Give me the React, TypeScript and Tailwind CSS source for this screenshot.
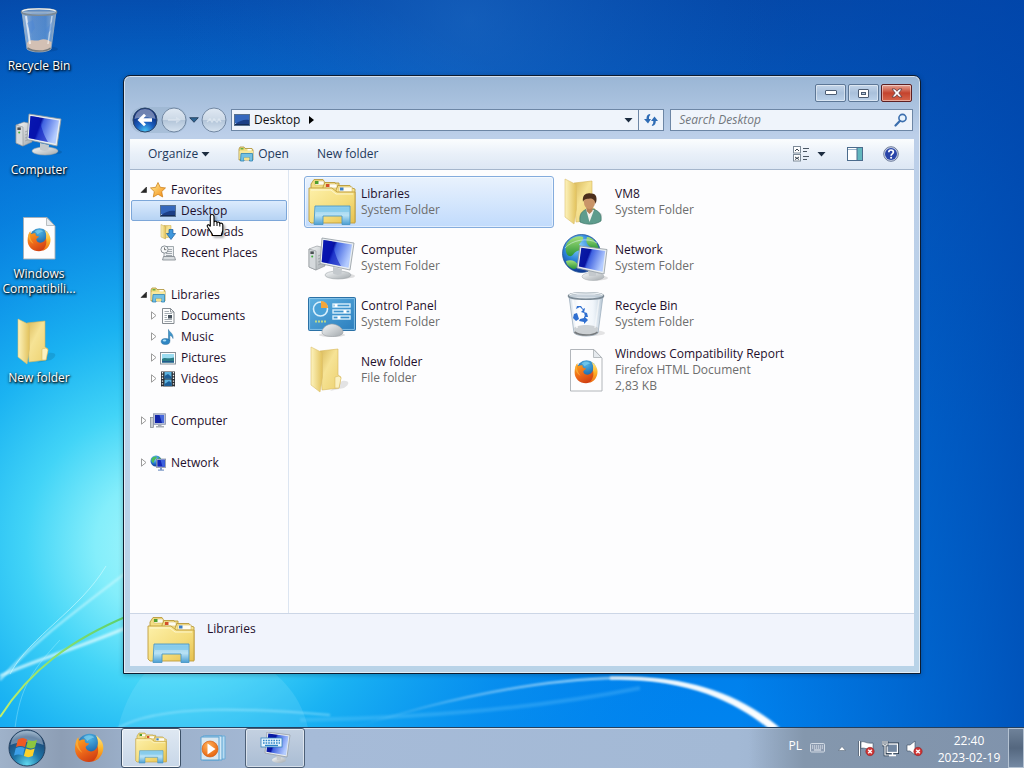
import React from "react";

type IconProps = { className?: string };

function SharedDefs() {
  return (
    <svg width="0" height="0" className="absolute" aria-hidden="true">
      <defs>
        <linearGradient id="screen" x1="0" y1="0" x2="1" y2="0.35">
          <stop offset="0" stopColor="#0a1fa8" />
          <stop offset="0.42" stopColor="#0713a0" />
          <stop offset="0.5" stopColor="#3f62e0" />
          <stop offset="1" stopColor="#b4ccff" />
        </linearGradient>
        <linearGradient id="metal" x1="0" y1="0" x2="1" y2="1">
          <stop offset="0" stopColor="#f7f9fa" />
          <stop offset="1" stopColor="#a3a9ad" />
        </linearGradient>
        <linearGradient id="folder" x1="0" y1="0" x2="1" y2="0">
          <stop offset="0" stopColor="#fdf3bd" />
          <stop offset="1" stopColor="#e2c25c" />
        </linearGradient>
        <linearGradient id="folderBack" x1="0" y1="0" x2="1" y2="1">
          <stop offset="0" stopColor="#d9b95a" />
          <stop offset="0.4" stopColor="#f6e395" />
          <stop offset="1" stopColor="#ecd06e" />
        </linearGradient>
        <linearGradient id="libBody" x1="0" y1="0" x2="1" y2="1">
          <stop offset="0" stopColor="#fdf0a9" />
          <stop offset="0.6" stopColor="#f4dc7a" />
          <stop offset="1" stopColor="#e6c04f" />
        </linearGradient>
        <linearGradient id="libStand" x1="0" y1="0" x2="0" y2="1">
          <stop offset="0" stopColor="#8fcdec" />
          <stop offset="0.5" stopColor="#b9e2f5" />
          <stop offset="1" stopColor="#4c9fd3" />
        </linearGradient>
        <radialGradient id="earth" cx="0.4" cy="0.3" r="0.75">
          <stop offset="0" stopColor="#8fd6ff" />
          <stop offset="0.5" stopColor="#2b83d8" />
          <stop offset="1" stopColor="#0b2c86" />
        </radialGradient>
        <linearGradient id="land" x1="0" y1="0" x2="0" y2="1">
          <stop offset="0" stopColor="#a4e07a" />
          <stop offset="1" stopColor="#2a9438" />
        </linearGradient>
        <linearGradient id="panel" x1="0" y1="0" x2="1" y2="1">
          <stop offset="0" stopColor="#5fb2e2" />
          <stop offset="1" stopColor="#2a7dbd" />
        </linearGradient>
        <linearGradient id="fox" x1="0.2" y1="0" x2="0.8" y2="1">
          <stop offset="0" stopColor="#f9a11d" />
          <stop offset="0.45" stopColor="#ee6a1a" />
          <stop offset="1" stopColor="#c83410" />
        </linearGradient>
        <linearGradient id="foxTail" x1="0" y1="0" x2="0" y2="1">
          <stop offset="0" stopColor="#ffe98a" />
          <stop offset="0.5" stopColor="#fdb62a" />
          <stop offset="1" stopColor="#ee6c15" />
        </linearGradient>
        <radialGradient id="foxGlobe" cx="0.5" cy="0.2" r="0.9">
          <stop offset="0" stopColor="#4fb4e4" />
          <stop offset="0.6" stopColor="#1f6aae" />
          <stop offset="1" stopColor="#15306e" />
        </radialGradient>
        <linearGradient id="glass" x1="0" y1="0" x2="1" y2="0">
          <stop offset="0" stopColor="#c3d3e0" stopOpacity="0.75" />
          <stop offset="0.3" stopColor="#ffffff" stopOpacity="0.35" />
          <stop offset="0.7" stopColor="#dbe9f5" stopOpacity="0.35" />
          <stop offset="1" stopColor="#9fb4c6" stopOpacity="0.8" />
        </linearGradient>
        <radialGradient id="orb" cx="0.5" cy="0.95" r="0.95">
          <stop offset="0" stopColor="#5fd7ee" />
          <stop offset="0.4" stopColor="#1e76a8" />
          <stop offset="0.8" stopColor="#1c4978" />
          <stop offset="1" stopColor="#7da0bd" />
        </radialGradient>
        <radialGradient id="backOrb" cx="0.5" cy="0.95" r="0.8">
          <stop offset="0" stopColor="#49c3f4" />
          <stop offset="0.45" stopColor="#1a5fc0" />
          <stop offset="0.9" stopColor="#102f7c" />
        </radialGradient>
        <linearGradient id="idleOrb" x1="0" y1="0" x2="0" y2="1">
          <stop offset="0" stopColor="#e0e9f3" />
          <stop offset="0.5" stopColor="#cbd8e6" />
          <stop offset="0.52" stopColor="#b3c5d9" />
          <stop offset="1" stopColor="#d6e3f0" />
        </linearGradient>
        <radialGradient id="play" cx="0.4" cy="0.3" r="0.8">
          <stop offset="0" stopColor="#ffb259" />
          <stop offset="1" stopColor="#e35a06" />
        </radialGradient>
        <linearGradient id="starFill" x1="0" y1="0" x2="1" y2="1">
          <stop offset="0" stopColor="#fff09a" />
          <stop offset="1" stopColor="#f58a12" />
        </linearGradient>
      </defs>
    </svg>
  );
}

function Wallpaper() {
  return (
    <svg
      className="absolute inset-0 h-full w-full"
      viewBox="0 0 1024 768"
      preserveAspectRatio="none"
      aria-hidden="true"
    >
      <defs>
        <linearGradient id="sky" x1="0" y1="0" x2="0" y2="1">
          <stop offset="0" stopColor="#0549a9" />
          <stop offset="0.25" stopColor="#0360c6" />
          <stop offset="0.55" stopColor="#0072dc" />
          <stop offset="1" stopColor="#0086f2" />
        </linearGradient>
        <radialGradient id="glow" gradientUnits="userSpaceOnUse" cx="165" cy="545" r="580">
          <stop offset="0" stopColor="#a8f7fc" />
          <stop offset="0.12" stopColor="#84eefb" />
          <stop offset="0.24" stopColor="#42d4f7" />
          <stop offset="0.38" stopColor="#1cb6f3" stopOpacity="0.95" />
          <stop offset="0.62" stopColor="#0c98f0" stopOpacity="0.55" />
          <stop offset="1" stopColor="#0080ee" stopOpacity="0" />
        </radialGradient>
        <radialGradient id="topGlow" gradientUnits="userSpaceOnUse" cx="470" cy="20" r="300">
          <stop offset="0" stopColor="#2878cf" stopOpacity="0.4" />
          <stop offset="1" stopColor="#1266c8" stopOpacity="0" />
        </radialGradient>
        <linearGradient id="rightShade" x1="0.72" y1="0" x2="1" y2="0">
          <stop offset="0" stopColor="#0048b0" stopOpacity="0" />
          <stop offset="1" stopColor="#0045ab" stopOpacity="0.75" />
        </linearGradient>
        <linearGradient id="arcWhite" x1="0" y1="0" x2="1" y2="0">
          <stop offset="0" stopColor="#ffffff" stopOpacity="0" />
          <stop offset="0.5" stopColor="#e8fbff" stopOpacity="0.7" />
          <stop offset="1" stopColor="#ffffff" />
        </linearGradient>
        <linearGradient id="greenLine" x1="0" y1="1" x2="1" y2="0">
          <stop offset="0" stopColor="#c4f06a" />
          <stop offset="1" stopColor="#58cf6c" />
        </linearGradient>
        <filter id="softLine" x="-10%" y="-10%" width="120%" height="120%">
          <feGaussianBlur stdDeviation="1" />
        </filter>
      </defs>
      <rect width="1024" height="768" fill="url(#sky)" />
      <rect width="1024" height="768" fill="url(#glow)" />
      <rect width="1024" height="768" fill="url(#topGlow)" />
      <rect width="1024" height="768" fill="url(#rightShade)" />
      <path d="M118 728C135 660 180 640 225 650C270 660 300 690 308 728Z" fill="#a5ecff" opacity="0.16" />
      <path d="M0 676C40 658 80 648 140 622" stroke="#e4fdff" strokeWidth="3" opacity="0.75" fill="none" filter="url(#softLine)" />
      <path d="M0 680C35 640 75 612 140 562" stroke="#d4fbff" strokeWidth="2" opacity="0.7" fill="none" filter="url(#softLine)" />
      <path d="M10 674C30 636 80 610 106 566" stroke="#d4fbff" strokeWidth="1" opacity="0.6" fill="none" />
      <path d="M15 728C20 690 30 672 60 640" stroke="#b8f6ff" strokeWidth="1" opacity="0.35" fill="none" />
      <path d="M0 717C30 670 70 640 130 615" stroke="url(#greenLine)" strokeWidth="2" fill="none" />
      <path d="M118 728C160 704 250 708 330 715" stroke="#bdf1ff" strokeWidth="2" opacity="0.45" fill="none" filter="url(#softLine)" />
      <path d="M300 720C420 718 540 708 640 688" stroke="#8fdcff" strokeWidth="4" opacity="0.22" fill="none" filter="url(#softLine)" />
      <path
        d="M340 732C430 704 530 680 620 679C690 680 735 702 768 728L780 728C740 694 690 676 620 677C530 678 430 702 340 732Z"
        fill="url(#arcWhite)"
        filter="url(#softLine)"
      />
      <path d="M610 678C690 677 735 698 774 728" stroke="#ffffff" strokeWidth="3" opacity="0.8" fill="none" filter="url(#softLine)" />
    </svg>
  );
}

/* ---------- 48px icons ---------- */

function ComputerIcon({ className }: IconProps) {
  return (
    <svg className={className} viewBox="0 0 48 48" aria-hidden="true">
      <ellipse cx="33" cy="42" rx="14" ry="3" fill="#000" opacity="0.12" />
      <path d="M1 15L9 12L17 14V32L8 36L1 33Z" fill="url(#metal)" stroke="#8b9196" strokeWidth="0.6" />
      <path d="M1 15L8 17V36L1 33Z" fill="#d5d9dc" stroke="#8b9196" strokeWidth="0.6" />
      <rect x="2.4" y="17.4" width="3.4" height="2.6" fill="#4a4f52" />
      <circle cx="4.2" cy="22.5" r="1" fill="#3fae3a" />
      <path d="M10 22L15 20M10 25L15 23M10 28L15 26M10 31L15 29" stroke="#9aa0a5" strokeWidth="0.8" />
      <ellipse cx="30" cy="41" rx="13" ry="4" fill="url(#metal)" stroke="#a0a6aa" strokeWidth="0.6" />
      <path d="M25 33L34 35L33.5 40C31 41.5 27 41 25 39.5Z" fill="#c4c9cd" />
      <path d="M14 4L46 9L42 36L12 29.500Z" fill="#e9eef1" stroke="#9199a0" strokeWidth="0.8" />
      <path d="M15.500 6L44 10.500L40.500 33.800L13.700 28Z" fill="url(#screen)" />
      <path d="M15.500 6L24 7.300C26 16 28 24 33 32L13.700 28Z" fill="#0513b8" opacity="0.55" />
    </svg>
  );
}

function LibrariesIcon({ className }: IconProps) {
  return (
    <svg className={className} viewBox="0 0 48 48" aria-hidden="true">
      <path d="M3 6L6 1.500H15L17 5H31V40H3Z" fill="#f3de84" stroke="#b99a3c" strokeWidth="0.9" />
      <rect x="7" y="3" width="9" height="4" fill="#fffdf0" stroke="#c9b15c" strokeWidth="0.5" />
      <rect x="7" y="3" width="3.500" height="3" fill="#4f9d2c" />
      <path d="M15 9L17 4.500H27L29 8H40V42H15Z" fill="#f6e38f" stroke="#b99a3c" strokeWidth="0.9" />
      <rect x="18" y="6" width="11" height="4" fill="#fffdf0" stroke="#c9b15c" strokeWidth="0.5" />
      <rect x="18" y="6" width="3.500" height="3" fill="#d24f28" />
      <path d="M28 12L30 7.500H42L44 10L47 11V44H28Z" fill="#f6e38f" stroke="#b99a3c" strokeWidth="0.9" />
      <rect x="31" y="9" width="13" height="5" fill="#fffdf0" stroke="#c9b15c" strokeWidth="0.5" />
      <rect x="32" y="9.500" width="3.500" height="3" fill="#3c7fc4" />
      <path d="M1 10H24L29 14H47V45H3L1 43Z" fill="url(#libBody)" stroke="#c09c3a" strokeWidth="0.9" />
      <path d="M3 12H23L28 16H45" fill="none" stroke="#fffbe0" strokeWidth="0.8" />
      <path d="M7 28H42V46.500H34V38H15V46.500H6Z" fill="url(#libStand)" stroke="#4b97c5" strokeWidth="0.9" strokeLinejoin="round" />
      <path d="M8 29.500H41V34H8Z" fill="#7cc8ea" opacity="0.65" />
    </svg>
  );
}

function FolderShape() {
  return (
    <>
      <path d="M22 45L36 42C43 38 41 34 34 35Z" fill="#000" opacity="0.1" />
      <path d="M12 5L30 3V29L33 31L31 42L14 44Z" fill="url(#folderBack)" stroke="#d7b75b" strokeWidth="0.6" />
      <path d="M27 31L31 30L33 32L31 42L27 42Z" fill="#fbf1c0" stroke="#d7b75b" strokeWidth="0.5" />
      <path d="M3 1L13 6C14 6.500 14.500 8 14.500 9V31L12 46L3 39Z" fill="url(#folder)" stroke="#dcc06b" strokeWidth="0.6" />
    </>
  );
}

function FolderIcon({ className }: IconProps) {
  return (
    <svg className={className} viewBox="0 0 48 48" aria-hidden="true">
      <FolderShape />
    </svg>
  );
}

function UserFolderIcon({ className }: IconProps) {
  return (
    <svg className={className} viewBox="0 0 48 48" aria-hidden="true">
      <FolderShape />
      <path d="M18 44C17 36 20 33 25 31H31C37 33 40 36 39 43C33 47 24 47 18 44Z" fill="#5e9c8d" stroke="#3e7567" strokeWidth="0.7" />
      <path d="M24 31L27.500 44L32 32Z" fill="#f2f3ee" />
      <path d="M24.500 28H30.500V33L27.500 36L24.500 33Z" fill="#b37f56" />
      <ellipse cx="27.500" cy="24" rx="5.600" ry="7" fill="#c99468" />
      <path d="M21 24C20 17 24 14.500 29 15.500C34 15 36 20 33.500 26C33 22 31 20.500 28 20.500C24 21 22 21 21 24Z" fill="#4b2e1b" />
    </svg>
  );
}

function NetworkIcon({ className }: IconProps) {
  return (
    <svg className={className} viewBox="0 0 48 48" aria-hidden="true">
      <circle cx="19.500" cy="19.500" r="19" fill="url(#earth)" stroke="#174a90" strokeWidth="0.7" />
      <path d="M5 9C10 3 16 1 21 3C22 6 18 8 17 11C21 12 20 16 15 17C11 19 11 23 7 22C3 20 3 13 5 9Z" fill="url(#land)" />
      <path d="M25 3C31 3 36 10 37 15C33 16 29 14 26 11C24 9 24 5 25 3Z" fill="url(#land)" />
      <path d="M4 27C9 25 14 27 16 31C15 35 12 36 9 34C6 32 4 30 4 27Z" fill="url(#land)" />
      <path d="M3 14C10 6 26 3 35 9" stroke="#e6f7ff" strokeWidth="1" opacity="0.5" fill="none" />
      <ellipse cx="36" cy="44" rx="10" ry="2.500" fill="#000" opacity="0.12" />
      <ellipse cx="31" cy="42.500" rx="11" ry="4" fill="url(#metal)" stroke="#a0a6aa" strokeWidth="0.5" />
      <path d="M26 36L34 38V42H27Z" fill="#c4c9cd" />
      <path d="M18 12L45 15.500L42 40L15 34Z" fill="#e9eef1" stroke="#9199a0" strokeWidth="0.8" />
      <path d="M19.300 13.800L43.200 17L40.500 37.800L16.800 32.600Z" fill="url(#screen)" />
    </svg>
  );
}

function ControlPanelIcon({ className }: IconProps) {
  return (
    <svg className={className} viewBox="0 0 48 48" aria-hidden="true">
      <rect x="0.500" y="7.500" width="47" height="33" rx="1" fill="url(#panel)" stroke="#2b71a6" />
      <rect x="1.700" y="8.700" width="44.600" height="30.600" fill="none" stroke="#9fd3f1" strokeWidth="0.7" />
      <circle cx="12.500" cy="19" r="7" fill="#4ba2d8" stroke="#d9effb" strokeWidth="1.600" />
      <path d="M13 18V11C17 11 20 14 20 18Z" fill="#f3a63b" />
      <path d="M7 31.500H18" stroke="#bcd98a" strokeWidth="1.800" strokeDasharray="2 1" />
      <g fill="none" stroke="#d9effb" strokeWidth="1.400">
        <rect x="25" y="14" width="17" height="3" />
        <rect x="25" y="20" width="17" height="3" />
        <rect x="25" y="26" width="17" height="3" />
      </g>
      <path d="M28 14V17M37 20V23M31 26V29" stroke="#fff" strokeWidth="3" />
      <ellipse cx="24" cy="45" rx="13" ry="2" fill="#000" opacity="0.12" />
      <path d="M14 42C14 38 19 34 24 34C29 34 35 38 35 42C35 45 30 46.500 24.500 46.500C18 46.500 14 45 14 42Z" fill="url(#metal)" stroke="#9aa0a5" strokeWidth="0.6" />
    </svg>
  );
}

function BinIcon({ className, full }: IconProps & { full?: boolean }) {
  return (
    <svg className={className} viewBox="0 0 48 48" aria-hidden="true">
      <ellipse cx="30" cy="43" rx="13" ry="3" fill="#000" opacity="0.1" />
      <path d="M7 6L12 43C16 47 32 47 36 43L41 6Z" fill="url(#glass)" stroke="#9fb0bf" strokeWidth="0.8" />
      {full ? (
        <path d="M12 37C16 32 20 36 25 34C30 32 34 35 36.500 36L35.500 43C31 46.500 17 46.500 12.500 43Z" fill="#d3c0b4" />
      ) : (
        <path d="M12 38C16 34 32 34 36 38L35.500 43C31 46.500 17 46.500 12.500 43Z" fill="#c9cdd0" opacity="0.9" />
      )}
      <path d="M12.500 42C18 46 31 46 35.500 42" fill="none" stroke="#75797c" strokeWidth="1.600" />
      <path d="M11 10L15 38" stroke="#fff" strokeWidth="2" opacity="0.7" />
      <path d="M37 10L33 38" stroke="#fff" strokeWidth="1.500" opacity="0.55" />
      <ellipse cx="24" cy="6" rx="17.500" ry="3.200" fill="#b8c6d2" fillOpacity="0.5" stroke="#7c8a95" strokeWidth="1.600" />
      <path d="M7 5.200C12 2.200 36 2.200 41 5.200" fill="none" stroke="#eef3f6" strokeWidth="1.200" />
      {full ? (
        <g fill="#4b86d6" opacity="0.45">
          <path d="M12 17L18 14L20 22L16 28Z" />
          <path d="M30 24L37 16L36 24L32 28Z" />
        </g>
      ) : (
        <g fill="#2f6fd0">
          <path d="M14 19L18 17L21 20L19 22L22 23L23 18L21 19L19 16L15 16Z" />
          <path d="M12 24L15 23L17 29L14 31L11 28Z" />
          <path d="M18 29L22 28L22 26L26 30L22 34L22 32L17 31Z" />
          <path d="M22 22L25 23L26 27L23 27Z" />
        </g>
      )}
    </svg>
  );
}

function FirefoxShape() {
  return (
    <>
      <circle cx="25" cy="21" r="18.500" fill="url(#foxGlobe)" />
      <path d="M16 8C20 4 28 4 32 8C28 10 24 10 22 14Z" fill="#7fd0ee" opacity="0.7" />
      <path d="M36 8C42 13 44 19 43 27C41 39 33 45 24 45C12 45 3 36 3 25C3 17 5 12 8 8C8 11 9 12 10 13C13 11 16 11 18 12C17 14 18 16 21 17H24C24 20 20 20 19 23C20 29 28 31 33 27C38 23 39 15 36 8Z" fill="url(#fox)" />
      <path d="M34 5C44 11 47.500 21 44.500 30C42 38 36 43 30 44C37 38 39 30 37 21C38 14 37 9 34 5Z" fill="url(#foxTail)" />
      <path d="M8 8C6 16 8 24 14 31C9 29 5 22 4 18C4 14 6 10 8 8Z" fill="#fbb03b" opacity="0.75" />
    </>
  );
}

function FirefoxIcon({ className }: IconProps) {
  return (
    <svg className={className} viewBox="0 0 48 48" aria-hidden="true">
      <FirefoxShape />
    </svg>
  );
}

function FirefoxDocIcon({ className }: IconProps) {
  return (
    <svg className={className} viewBox="0 0 48 48" aria-hidden="true">
      <path d="M8.500 3.500H32L40 12V45H8.500Z" fill="#fdfdfe" stroke="#a9aeb3" strokeWidth="0.9" />
      <path d="M31.500 3.500V11.500H39.500Z" fill="#e6eaee" stroke="#a9aeb3" strokeWidth="0.8" />
      <g transform="translate(11 13) scale(0.54)">
        <FirefoxShape />
      </g>
    </svg>
  );
}

/* ---------- 16px icons ---------- */

function StarIcon() {
  return (
    <svg className="size-4" viewBox="0 0 16 16" aria-hidden="true">
      <path d="M8 0.500L10.300 5.300L15.500 5.900L11.700 9.600L12.700 15L8 12.300L3.300 15L4.300 9.600L0.500 5.900L5.700 5.300Z" fill="url(#starFill)" stroke="#c9790f" strokeWidth="0.7" />
    </svg>
  );
}

function DesktopSmallIcon() {
  return (
    <svg className="size-4" viewBox="0 0 16 16" aria-hidden="true">
      <rect x="0.500" y="2.500" width="15" height="11" fill="#1c3f86" stroke="#56708f" />
      <path d="M1 3H15V8C10 7 6 9 1 12Z" fill="#3568bd" />
      <path d="M1 11L4 13H1Z" fill="#d8e6f5" />
      <path d="M1 12.500H15" stroke="#142c58" />
    </svg>
  );
}

function DownloadsIcon() {
  return (
    <svg className="size-4" viewBox="0 0 16 16" aria-hidden="true">
      <path d="M4 1.500H11V13L4 14Z" fill="url(#folderBack)" stroke="#c8a84c" strokeWidth="0.5" />
      <path d="M1 0.500L5.500 2.500V15L1 13Z" fill="url(#folder)" stroke="#c8a84c" strokeWidth="0.5" />
      <path d="M9 5.500H13V9.500H15.500L11 15.500L6.500 9.500H9Z" fill="#3f97dc" stroke="#1c5f9f" strokeWidth="0.7" />
    </svg>
  );
}

function RecentIcon() {
  return (
    <svg className="size-4" viewBox="0 0 16 16" aria-hidden="true">
      <path d="M4 1.500H13.500V12H4Z" fill="#eef0f2" stroke="#8d959c" strokeWidth="0.8" />
      <path d="M8 4.500H12M8 6.500H12M6 8.500H12M6 10.500H12" stroke="#8d959c" strokeWidth="0.8" />
      <path d="M3.500 11.500H14.500L15.500 15H2.500Z" fill="#d8dcdf" stroke="#7f878d" strokeWidth="0.8" />
      <circle cx="4.500" cy="4.500" r="3.600" fill="#f8fafb" stroke="#7f878d" strokeWidth="0.9" />
      <path d="M4.500 2.500V4.700H6.300" stroke="#555" strokeWidth="0.8" fill="none" />
    </svg>
  );
}

function DocumentsIcon() {
  return (
    <svg className="size-4" viewBox="0 0 16 16" aria-hidden="true">
      <path d="M2.500 0.500H10.500L14 4V15.500H2.500Z" fill="#fcfdfd" stroke="#777e85" strokeWidth="0.9" />
      <path d="M10.500 0.500V4H14" fill="none" stroke="#777e85" strokeWidth="0.8" />
      <path d="M4.500 3.500H9M4.500 5.500H12M4.500 7.500H7M4.500 9.500H7M4.500 11.500H12M4.500 13.500H12" stroke="#8f98a0" strokeWidth="0.8" />
      <rect x="8" y="7" width="4" height="3.500" fill="#46525d" />
    </svg>
  );
}

function MusicIcon() {
  return (
    <svg className="size-4" viewBox="0 0 16 16" aria-hidden="true">
      <path d="M8.500 0.500C9 3 13.500 4 13 9.500C12.500 7.500 11 6.500 9.800 6.500V12H8.500Z" fill="#3f97cc" stroke="#22699b" strokeWidth="0.5" />
      <ellipse cx="5.500" cy="12.500" rx="4.300" ry="3" fill="#2f86c3" stroke="#22699b" strokeWidth="0.5" />
      <ellipse cx="4.500" cy="11.600" rx="1.800" ry="1" fill="#a8dcf6" />
    </svg>
  );
}

function PicturesIcon() {
  return (
    <svg className="size-4" viewBox="0 0 16 16" aria-hidden="true">
      <rect x="0.500" y="2.500" width="15" height="11.500" fill="#fdfdfd" stroke="#8a9299" />
      <rect x="2" y="4" width="12" height="8.500" fill="#9bdcf0" />
      <path d="M2 9C5 6.500 8 9.500 14 7.500V12.500H2Z" fill="#2b7d86" />
      <path d="M2 11H14V12.500H2Z" fill="#235a8c" />
    </svg>
  );
}

function VideosIcon() {
  return (
    <svg className="size-4" viewBox="0 0 16 16" aria-hidden="true">
      <rect x="1" y="0.500" width="14" height="15" fill="#2a2e33" />
      <path d="M2.500 1V15.500M13.500 1V15.500" stroke="#f4f4f4" strokeWidth="1.300" strokeDasharray="1.400 1.400" />
      <rect x="4.500" y="1" width="7" height="6.500" fill="#5bb2df" />
      <rect x="4.500" y="8.500" width="7" height="6.500" fill="#5bb2df" />
      <path d="M4.500 5L8 3L11.500 6V7.500H4.500ZM4.500 13L9 10L11.500 12V15H4.500Z" fill="#1c5e97" />
    </svg>
  );
}

function ComputerSmallIcon() {
  return (
    <svg className="size-4" viewBox="0 0 16 16" aria-hidden="true">
      <rect x="0.500" y="4.500" width="3" height="10" fill="#c8cdd1" stroke="#7d858c" strokeWidth="0.7" />
      <rect x="3.500" y="0.800" width="12" height="10.500" fill="#b9c1da" stroke="#8790a8" strokeWidth="0.8" />
      <rect x="5" y="2" width="9" height="8" fill="#1124a8" />
      <path d="M9.500 2H14V10H12Z" fill="#4668dc" />
      <path d="M8 11.500H11.500V13H14V14.500H6V13H8Z" fill="#a8aeb4" />
    </svg>
  );
}

function NetworkSmallIcon() {
  return (
    <svg className="size-4" viewBox="0 0 16 16" aria-hidden="true">
      <circle cx="6" cy="6" r="5.500" fill="url(#earth)" />
      <path d="M1.500 4C3 1.500 6 1 7 2C6 4 4 5 3.500 8C2 7.500 1 6 1.500 4ZM9 2C11 3 11.500 5 11 6L8 4.500Z" fill="#4cbc57" />
      <rect x="6.500" y="4" width="9.200" height="8.500" fill="#dde3ea" stroke="#6d7885" strokeWidth="0.6" />
      <rect x="7.300" y="4.800" width="7.600" height="6.900" fill="#1328b8" />
      <path d="M10.500 4.800H14.900V11.700H12.500Z" fill="#3c62de" />
      <path d="M10 12.500H12V14.500H14V15.700H8V14.500H10Z" fill="#7f9ac8" />
    </svg>
  );
}

function LibrariesSmallIcon() {
  return (
    <svg className="size-4" viewBox="0 0 16 16" aria-hidden="true">
      <path d="M1 3L2 1H6L7 2.500H14L15 4V14H1Z" fill="#f3df86" stroke="#a98f3a" strokeWidth="0.8" />
      <rect x="2.500" y="2" width="3" height="1.500" fill="#6aae43" />
      <rect x="9.500" y="3" width="4" height="1.500" fill="#fff" />
      <path d="M1.500 5H15V13H1.500Z" fill="#f8e89d" />
      <path d="M3 7.500H14.500V15H11.500V11.500H6V15H2.500Z" fill="#73c0e4" stroke="#2f84b4" strokeWidth="0.8" />
      <path d="M6 11.500H11.500V14H6Z" fill="#f5e28c" />
    </svg>
  );
}

function MediaPlayerIcon() {
  return (
    <svg className="size-8" viewBox="0 0 32 32" aria-hidden="true">
      <path d="M8 4H28V27H8Z" fill="#b9dcf2" stroke="#6bacd8" />
      <path d="M6 4H25V28H6Z" fill="#d3e9f6" stroke="#5aa2d2" />
      <path d="M4 5H22V28H4Z" fill="#d9e7f0" stroke="#5aa2d2" />
      <circle cx="13" cy="17" r="8" fill="url(#play)" stroke="#cf5a10" strokeWidth="0.6" />
      <path d="M10.500 11.500L18.500 17L10.500 22.500Z" fill="#fff" />
    </svg>
  );
}

function KeyboardComputerIcon() {
  return (
    <svg className="size-8" viewBox="0 0 32 32" aria-hidden="true">
      <ellipse cx="20" cy="28" rx="7" ry="3" fill="url(#metal)" />
      <path d="M17 22L22 23V28H18Z" fill="#c4c9cd" />
      <path d="M8 0L31 3L28 25L6 21Z" fill="#e9eef1" stroke="#8f969c" strokeWidth="0.7" />
      <path d="M9.300 1.500L29.500 4.200L27 23.300L7.500 19.700Z" fill="url(#screen)" />
      <rect x="2" y="6" width="21" height="9" fill="#e6f5fd" stroke="#3483bd" strokeWidth="0.8" />
      <path d="M4 8.500H21M4 11H21" stroke="#2f86c8" strokeWidth="1.600" strokeDasharray="1.600 1" />
      <path d="M6 13.500H19" stroke="#2f86c8" strokeWidth="1.400" />
    </svg>
  );
}

function StartOrb() {
  return (
    <svg className="size-10" viewBox="0 0 40 40" aria-hidden="true">
      <circle cx="20" cy="20" r="18" fill="url(#orb)" stroke="#24405f" strokeWidth="1" />
      <path d="M3.500 17C5 7 12 3 20 3C28 3 35 7 36.500 17C28 13 12 13 3.500 17Z" fill="#fff" opacity="0.35" />
      <path d="M11 11.500C14 9.500 17 9.500 20 11.500L18 19C15 17.500 12 17.500 9 19Z" fill="#ee5a24" />
      <path d="M21 12C24 13.500 27 13.500 30 11.800L28 19.200C25 21 22 20.500 19.200 19.300Z" fill="#8cc63f" />
      <path d="M8.700 20.200C12 18.500 15 18.700 17.700 20.200L15.700 27.500C13 26 10 26 7 27.500Z" fill="#3c9fe8" />
      <path d="M18.900 20.500C22 22 25 22 27.700 20.500L25.700 28C22.500 29.500 20 29.500 16.900 28Z" fill="#fcd12a" />
    </svg>
  );
}

function BlackArrow() {
  return (
    <svg className="h-[5px] w-[9px]" viewBox="0 0 9 5" aria-hidden="true">
      <path d="M0.500 0H8.500L4.500 4.500Z" fill="#1c2c40" />
    </svg>
  );
}

function RedCross() {
  return (
    <g>
      <circle cx="12" cy="11.500" r="4.200" fill="#cf3535" stroke="#8d1a1a" strokeWidth="0.5" />
      <path d="M10.200 9.700L13.800 13.300M13.800 9.700L10.200 13.300" stroke="#fff" strokeWidth="1.400" />
    </g>
  );
}

/* ---------- Desktop ---------- */

const shortcuts = [
  { label: "Recycle Bin", icon: <BinIcon className="size-12" full /> },
  { label: "Computer", icon: <ComputerIcon className="size-12" /> },
  { label: "Windows Compatibili...", icon: <FirefoxDocIcon className="size-12" /> },
  { label: "New folder", icon: <FolderIcon className="size-12" /> },
];

function DesktopShortcuts() {
  return (
    <ul className="relative flex w-[78px] flex-col">
      {shortcuts.map((s) => (
        <li key={s.label} className="h-[104px]">
          <button className="flex w-full flex-col items-center gap-1 pt-[6px]">
            {s.icon}
            <span className="text-center leading-[15px] text-white [text-shadow:1px_1px_2px_#000,0_1px_3px_#000]">
              {s.label}
            </span>
          </button>
        </li>
      ))}
    </ul>
  );
}

/* ---------- Window ---------- */

function CaptionButtons() {
  const base =
    "flex h-[18px] w-[31px] items-center justify-center rounded-[2px] border shadow-[inset_0_0_0_1px_rgba(255,255,255,0.45)]";
  return (
    <div className="flex gap-[2px]">
      <button aria-label="Minimize" className={`${base} border-[#5d7796] bg-linear-to-b from-[#c3d5e9] via-[#a9c0db] to-[#bcd2ea]`}>
        <svg width="12" height="6" viewBox="0 0 12 6">
          <rect x="0.500" y="0.500" width="11" height="4" rx="0.500" fill="#fff" stroke="#4c5c72" />
        </svg>
      </button>
      <button aria-label="Maximize" className={`${base} border-[#5d7796] bg-linear-to-b from-[#c3d5e9] via-[#a9c0db] to-[#bcd2ea]`}>
        <svg width="11" height="9" viewBox="0 0 11 9">
          <rect x="0.500" y="0.500" width="10" height="8" rx="0.500" fill="#fff" stroke="#4c5c72" />
          <rect x="3.500" y="3.500" width="4" height="2" fill="#b5c9e0" stroke="#4c5c72" />
        </svg>
      </button>
      <button aria-label="Close" className={`${base} border-[#5c1f22] bg-linear-to-b from-[#e3a294] via-[#c4432d] to-[#d7664c]`}>
        <svg width="12" height="10" viewBox="0 0 12 10">
          <path d="M1 1H4L6 3.300L8 1H11L7.800 5L11 9H8L6 6.700L4 9H1L4.200 5Z" fill="#fff" stroke="#5d3a40" strokeWidth="0.8" />
        </svg>
      </button>
    </div>
  );
}

function NavRow() {
  return (
    <div className="flex h-[26px] items-center pr-px">
      <div className="mr-1 flex h-[26px] items-center">
        <div className="flex items-center gap-[3px] rounded-full bg-[#8fa9c2]/40 pl-[2px]">
          <button aria-label="Back">
            <svg width="26" height="26" viewBox="0 0 26 26">
              <circle cx="13" cy="13" r="12" fill="url(#backOrb)" stroke="#2c4668" />
              <path d="M2.500 12C3.500 5 8 2 13 2C18 2 22.500 5 23.500 12C17 10 9 10 2.500 12Z" fill="#fff" opacity="0.4" />
              <path d="M5.500 13L12 6.800L14 8.800L11.500 11.300H20V14.700H11.500L14 17.200L12 19.200Z" fill="#fff" />
            </svg>
          </button>
          <button aria-label="Forward">
            <svg width="26" height="26" viewBox="0 0 26 26">
              <circle cx="13" cy="13" r="12" fill="url(#idleOrb)" stroke="#7288a3" />
              <path d="M20 13L15 9.500V12H7V14H15V16.500Z" fill="#dfe8f1" opacity="0.6" />
            </svg>
          </button>
        </div>
        <button aria-label="Recent pages" className="flex w-[14px] justify-center">
          <svg width="10" height="6" viewBox="0 0 10 6">
            <path d="M0.700 0.700H9.300L5 5.300Z" fill="#2d6493" stroke="#1c3550" strokeWidth="0.8" />
          </svg>
        </button>
        <button aria-label="Refresh view">
          <svg width="26" height="26" viewBox="0 0 26 26">
            <circle cx="13" cy="13" r="12" fill="url(#idleOrb)" stroke="#7288a3" />
            <path d="M6 15L9 12L11 15L13 12L16 15L18 12L20 15" fill="none" stroke="#e3ebf3" strokeWidth="1.500" opacity="0.7" />
          </svg>
        </button>
      </div>
      <nav
        aria-label="Address"
        className="flex h-[22px] min-w-0 flex-1 items-center border border-[#6d86a5] bg-[#eff4fb] pl-[2px]"
      >
        <DesktopSmallIcon />
        <a href="#desktop" className="pl-1 leading-4 text-[#111]">
          Desktop
        </a>
        <svg className="ml-[9px]" width="5" height="8" viewBox="0 0 5 8" aria-hidden="true">
          <path d="M0 0L5 4L0 8Z" fill="#000" />
        </svg>
        <button aria-label="Previous locations" className="ml-auto flex h-full w-5 items-center justify-center">
          <BlackArrow />
        </button>
        <button aria-label="Refresh" className="flex h-full w-[25px] items-center justify-center border-l border-[#6d86a5]">
          <svg width="16" height="14" viewBox="0 0 16 14">
            <path d="M6.500 1C4 1.500 3.500 3.500 3.500 6H1L5 10.500L8 6H6C6 4 6 3 7.500 1.800Z" fill="#2f6cb5" />
            <path d="M9.500 13C12 12.500 12.800 10.500 12.800 8H15L11.500 3.500L8 8H10.300C10.300 10 10.300 11 8.700 12.200Z" fill="#2f6cb5" />
          </svg>
        </button>
      </nav>
      <div className="ml-[6px] flex h-[22px] w-[31%] items-center border border-[#6d86a5] bg-[#eff4fb] pr-1 pl-2">
        <input
          type="search"
          aria-label="Search Desktop"
          placeholder="Search Desktop"
          className="min-w-0 flex-1 bg-transparent leading-4 italic outline-none placeholder:text-[#72777d]"
        />
        <svg width="14" height="14" viewBox="0 0 14 14" aria-hidden="true">
          <circle cx="8.500" cy="5" r="3.600" fill="#e8f3fd" stroke="#3c6fae" strokeWidth="1.600" />
          <path d="M5.800 8L1.500 12.500" stroke="#3c6fae" strokeWidth="2.200" strokeLinecap="round" />
        </svg>
      </div>
    </div>
  );
}

function CommandBar() {
  return (
    <div
      role="toolbar"
      aria-label="Folder commands"
      className="flex h-[31px] shrink-0 items-center border-b border-[#a5b6cc] bg-linear-to-b from-[#fbfdfe] via-[#e9f0f9] to-[#dde7f4] pr-[15px] pl-[18px] text-[#1e395b]"
    >
      <button className="flex items-center gap-[3px]">
        Organize
        <BlackArrow />
      </button>
      <button className="ml-7 flex items-center gap-1">
        <LibrariesSmallIcon />
        Open
      </button>
      <button className="ml-7">New folder</button>
      <div className="ml-auto flex items-center">
        <button aria-label="Change your view" className="mr-[2px]">
          <svg width="16" height="16" viewBox="0 0 16 16">
            <rect x="0.500" y="0.500" width="7" height="6.500" fill="#fff" stroke="#7e8b98" />
            <rect x="0.500" y="8.500" width="7" height="6.500" fill="#fff" stroke="#7e8b98" />
            <path d="M2 5L4 3L6 5M2 11L6 13.500M6 11L2 13.500" stroke="#37424e" fill="none" />
            <path d="M10 2.500H16M10 5.500H14M10 10.500H16M10 13.500H14" stroke="#4a5663" />
          </svg>
        </button>
        <button aria-label="More view options" className="flex w-5 justify-center">
          <BlackArrow />
        </button>
        <button aria-label="Show the preview pane" className="ml-4">
          <svg width="16" height="14" viewBox="0 0 16 14">
            <rect x="0.500" y="0.500" width="15" height="13" fill="#fff" stroke="#4b6b8c" />
            <path d="M1 2.500H15" stroke="#9ab2ca" />
            <rect x="10" y="1" width="5" height="12" fill="#63b7be" />
            <path d="M10 1V13" stroke="#4b6b8c" />
          </svg>
        </button>
        <button aria-label="Get help" className="ml-5">
          <svg width="16" height="16" viewBox="0 0 16 16">
            <circle cx="8" cy="8" r="7.300" fill="#cdd6e8" stroke="#6d7b9a" />
            <circle cx="8" cy="8" r="6" fill="#2944a8" />
            <path d="M5.800 6.300C5.800 3.200 10.400 3.300 10.400 6.100C10.400 7.900 8.100 7.800 8.100 9.700" stroke="#fff" strokeWidth="1.700" fill="none" />
            <circle cx="8.100" cy="11.800" r="1.050" fill="#fff" />
          </svg>
        </button>
      </div>
    </div>
  );
}

type TreeRow = {
  label: string;
  icon: React.ReactNode;
  arrow?: "open" | "closed";
  selected?: boolean;
};

function Twisty({ kind }: { kind?: "open" | "closed" }) {
  return (
    <svg className="mr-[2px] h-[9px] w-2" viewBox="0 0 8 9" aria-hidden="true">
      {kind === "open" ? <path d="M6.500 2V7.500H1Z" fill="#262626" stroke="#111" strokeWidth="0.5" /> : null}
      {kind === "closed" ? <path d="M1.500 0.800L6 4.500L1.500 8.200Z" fill="#fff" stroke="#9b9b9b" /> : null}
    </svg>
  );
}

function Row({ row, child }: { row: TreeRow; child?: boolean }) {
  return (
    <button
      className={`flex h-[21px] w-full items-center rounded-[2px] border text-[#1e0f2c] ${child ? "pl-[18px]" : "pl-2"} ${
        row.selected
          ? "border-[#7da7d9] bg-linear-to-b from-[#dcebfd] to-[#b6d3f4]"
          : "border-transparent"
      }`}
    >
      <Twisty kind={row.arrow} />
      {row.icon}
      <span className="pl-[5px] leading-4">{row.label}</span>
    </button>
  );
}

const tree: { head: TreeRow; children: TreeRow[] }[] = [
  {
    head: { label: "Favorites", icon: <StarIcon />, arrow: "open" },
    children: [
      { label: "Desktop", icon: <DesktopSmallIcon />, selected: true },
      { label: "Downloads", icon: <DownloadsIcon /> },
      { label: "Recent Places", icon: <RecentIcon /> },
    ],
  },
  {
    head: { label: "Libraries", icon: <LibrariesSmallIcon />, arrow: "open" },
    children: [
      { label: "Documents", icon: <DocumentsIcon />, arrow: "closed" },
      { label: "Music", icon: <MusicIcon />, arrow: "closed" },
      { label: "Pictures", icon: <PicturesIcon />, arrow: "closed" },
      { label: "Videos", icon: <VideosIcon />, arrow: "closed" },
    ],
  },
  { head: { label: "Computer", icon: <ComputerSmallIcon />, arrow: "closed" }, children: [] },
  { head: { label: "Network", icon: <NetworkSmallIcon />, arrow: "closed" }, children: [] },
];

function NavigationPane() {
  return (
    <aside className="w-[159px] shrink-0 border-r border-[#dce5f1] bg-[#fdfdfe] px-px pt-[9px]">
      <ul className="flex flex-col gap-[21px]">
        {tree.map((group) => (
          <li key={group.head.label}>
            <Row row={group.head} />
            {group.children.length > 0 ? (
              <ul>
                {group.children.map((c) => (
                  <li key={c.label}>
                    <Row row={c} child />
                  </li>
                ))}
              </ul>
            ) : null}
          </li>
        ))}
      </ul>
    </aside>
  );
}

const files = [
  { name: "Libraries", lines: ["System Folder"], icon: <LibrariesIcon className="size-12 shrink-0" />, selected: true },
  { name: "VM8", lines: ["System Folder"], icon: <UserFolderIcon className="size-12 shrink-0" /> },
  { name: "Computer", lines: ["System Folder"], icon: <ComputerIcon className="size-12 shrink-0" /> },
  { name: "Network", lines: ["System Folder"], icon: <NetworkIcon className="size-12 shrink-0" /> },
  { name: "Control Panel", lines: ["System Folder"], icon: <ControlPanelIcon className="size-12 shrink-0" /> },
  { name: "Recycle Bin", lines: ["System Folder"], icon: <BinIcon className="size-12 shrink-0" /> },
  { name: "New folder", lines: ["File folder"], icon: <FolderIcon className="size-12 shrink-0" /> },
  {
    name: "Windows Compatibility Report",
    lines: ["Firefox HTML Document", "2,83 KB"],
    icon: <FirefoxDocIcon className="size-12 shrink-0" />,
  },
];

function FileGrid() {
  return (
    <ul className="grid flex-1 grid-cols-[repeat(auto-fill,250px)] content-start gap-1 overflow-hidden bg-[#fdfdfe] pt-[6px] pl-[15px]">
      {files.map((f) => (
        <li key={f.name}>
          <button
            className={`flex h-[52px] w-full items-center gap-[5px] rounded-[3px] border px-[3px] text-left leading-4 ${
              f.selected
                ? "border-[#84acdd] bg-linear-to-b from-[#e9f2fd] to-[#c1dbfc] shadow-[inset_0_0_0_1px_rgba(255,255,255,0.5)]"
                : "border-transparent"
            }`}
          >
            {f.icon}
            <span className="flex flex-col whitespace-nowrap">
              <span className="text-[#1e0f2c]">{f.name}</span>
              {f.lines.map((l) => (
                <span key={l} className="text-[#6d6d6d]">
                  {l}
                </span>
              ))}
            </span>
          </button>
        </li>
      ))}
    </ul>
  );
}

function ExplorerWindow() {
  return (
    <section
      aria-label="Desktop"
      className="absolute top-[75px] right-[103px] bottom-[54px] left-[123px] flex flex-col rounded-t-[7px] border border-[#0d1c30] bg-linear-to-b from-[#9ab6d5] via-[#bccfe9] via-10% to-[#b9d3e8] px-[6px] pb-[7px] shadow-[inset_0_0_0_1px_rgba(255,255,255,0.6),0_1px_5px_rgba(0,0,0,0.25)]"
    >
      <header className="flex h-[31px] shrink-0 items-start justify-end pt-2 pr-[2px]">
        <CaptionButtons />
      </header>
      <NavRow />
      <div className="mt-[6px] flex min-h-0 flex-1 flex-col">
        <CommandBar />
        <div className="flex min-h-0 flex-1">
          <NavigationPane />
          <FileGrid />
        </div>
        <footer className="flex h-[53px] shrink-0 gap-3 border-t border-[#ccd6e6] bg-[#f1f4fc] pt-[2px] pl-[17px] text-[#1e0f2c]">
          <LibrariesIcon className="size-12" />
          <span className="pt-[5px] leading-4">Libraries</span>
        </footer>
      </div>
    </section>
  );
}

function HandCursor() {
  return (
    <svg
      className="absolute top-[213px] left-[206px] h-[24px] w-[20px] drop-shadow-[2px_2px_1px_rgba(0,0,0,0.3)]"
      viewBox="0 0 20 24"
      aria-hidden="true"
    >
      <path
        d="M6 1.500C7.500 1.500 8 2.300 8 3.500V9C8.500 7.800 10.800 8 11 9.500C11.800 8.600 13.600 9 13.800 10.500C14.800 9.800 16.800 10.300 16.800 12V17C16.800 19 15.500 20 15.300 22.500H6.500C6.300 20 4.500 18.800 3.200 16.500C2.300 14.900 0.700 13.500 1.200 12.500C2 11 3.500 12 4.300 13.500V3.500C4.300 2.300 4.700 1.500 6 1.500Z"
        fill="#fff"
        stroke="#000"
        strokeWidth="1.100"
      />
      <path d="M8 9V13M11 9.500V13M13.800 10.500V13.500" stroke="#000" strokeWidth="1" />
    </svg>
  );
}

/* ---------- Taskbar ---------- */

function TaskButton({ label, active, children }: { label: string; active?: "front" | "back"; children: React.ReactNode }) {
  const look =
    active === "front"
      ? "border-[#3d5168] bg-linear-to-b from-[#dfe8f2] to-[#c8d7e8] shadow-[inset_0_0_0_1px_rgba(255,255,255,0.75)]"
      : active === "back"
        ? "border-[#4d6078] bg-linear-to-b from-[#c4d1e1] to-[#aabdd4] shadow-[inset_0_0_0_1px_rgba(255,255,255,0.5)]"
        : "border-transparent";
  return (
    <button aria-label={label} className={`flex h-10 w-[60px] items-center justify-center rounded-[3px] border ${look}`}>
      {children}
    </button>
  );
}

function Taskbar() {
  return (
    <footer className="relative flex h-10 shrink-0 items-stretch bg-[linear-gradient(to_right,#9fb2ca_0%,#8d9eb5_6%,#9aaec8_12%,#a6bbd8_30%,#a3b9d5_72%,#8399b3_100%)] text-white shadow-[inset_0_1px_0_#d3e0ee,0_-1px_0_#24405f]">
      <button aria-label="Start" className="mr-[12px] ml-[7px]">
        <StartOrb />
      </button>
      <div className="flex gap-[2px]">
        <TaskButton label="Mozilla Firefox">
          <FirefoxIcon className="size-8" />
        </TaskButton>
        <TaskButton label="Windows Explorer" active="front">
          <LibrariesIcon className="size-8" />
        </TaskButton>
        <TaskButton label="Windows Media Player">
          <MediaPlayerIcon />
        </TaskButton>
        <TaskButton label="On-Screen Keyboard" active="back">
          <KeyboardComputerIcon />
        </TaskButton>
      </div>
      <div className="ml-auto flex items-center bg-linear-to-r from-transparent via-[#8497ad] via-20% to-[#8093ac] pl-10">
        <button className="pb-1 leading-4">PL</button>
        <button aria-label="Keyboard layout" className="ml-2">
          <svg width="15" height="10" viewBox="0 0 15 10">
            <rect x="0.500" y="0.500" width="14" height="8.500" rx="1" fill="#8c9bb0" stroke="#d9e1ea" strokeWidth="0.9" />
            <path d="M2 3H13M2 5H13" stroke="#eef2f7" strokeDasharray="1.200 0.800" />
            <path d="M4 7H11" stroke="#eef2f7" />
          </svg>
        </button>
        <button aria-label="Show hidden icons" className="ml-[13px]">
          <svg width="8" height="5" viewBox="0 0 8 5">
            <path d="M0.500 4.500L4 0.500L7.500 4.500Z" fill="#fff" stroke="#4b5a6c" strokeWidth="0.5" />
          </svg>
        </button>
        <button aria-label="Action Center" className="ml-3">
          <svg width="17" height="17" viewBox="0 0 17 17">
            <path d="M1.500 1V16" stroke="#26384d" strokeWidth="2.600" />
            <path d="M1.500 1V16" stroke="#fff" strokeWidth="1.400" />
            <path d="M3 2C6 0.500 8 4 15 3V9C9 10 6 7 3 8.500Z" fill="#fff" stroke="#26384d" strokeWidth="0.5" />
            <RedCross />
          </svg>
        </button>
        <button aria-label="Network" className="ml-[7px]">
          <svg width="17" height="17" viewBox="0 0 17 17">
            <rect x="5" y="4" width="10.500" height="8.500" fill="#7388a2" stroke="#26384d" strokeWidth="3" />
            <rect x="5" y="4" width="10.500" height="8.500" fill="#7388a2" stroke="#fff" strokeWidth="1.300" />
            <path d="M7 15.500H14M10.500 13V15" stroke="#fff" strokeWidth="1.400" />
            <path d="M1 1V5H5V1M3 1V4M3 5V15H7" stroke="#26384d" strokeWidth="2.600" fill="none" />
            <path d="M1 1V5H5V1M3 1V4M3 5V15H7" stroke="#fff" strokeWidth="1.200" fill="none" />
          </svg>
        </button>
        <button aria-label="Volume muted" className="ml-[7px]">
          <svg width="17" height="17" viewBox="0 0 17 17">
            <path d="M1 5H4L9 1V15L4 11H1Z" fill="#fff" stroke="#3a4b60" strokeWidth="0.6" />
            <RedCross />
          </svg>
        </button>
        <button className="ml-[15px] flex w-[62px] flex-col items-center pt-[2px] whitespace-nowrap">
          <time className="leading-[17px]">22:40</time>
          <time className="leading-[17px]">2023-02-19</time>
        </button>
        <button
          aria-label="Show desktop"
          className="ml-2 h-10 w-4 border border-[#b4c2d2] bg-linear-to-b from-[#6f8299] via-[#54677f] to-[#7489a3]"
        />
      </div>
    </footer>
  );
}

export default function App() {
  return (
    <div className="relative flex h-screen flex-col overflow-hidden font-['Open_Sans','Noto_Sans',sans-serif] text-[12px] text-[#111]">
      <SharedDefs />
      <Wallpaper />
      <main className="relative min-h-0 flex-1">
        <DesktopShortcuts />
        <ExplorerWindow />
        <HandCursor />
      </main>
      <Taskbar />
    </div>
  );
}
